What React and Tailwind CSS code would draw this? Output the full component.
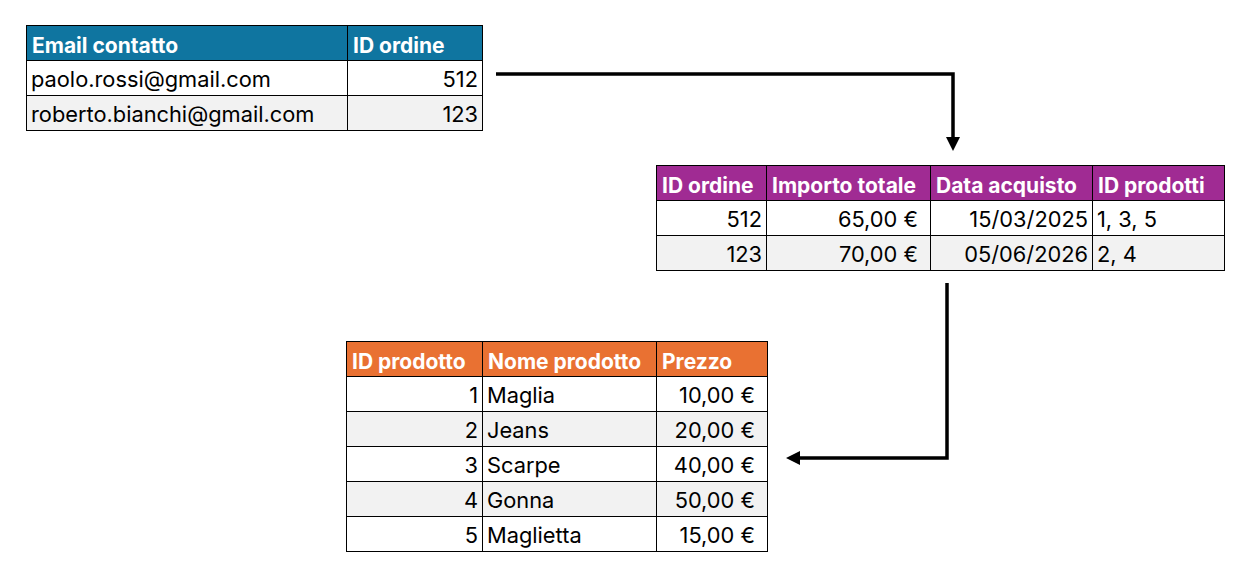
import React from "react";

const emails = [
  { email: "paolo.rossi@gmail.com", id: 512 },
  { email: "roberto.bianchi@gmail.com", id: 123 },
];

const orders = [
  { id: 512, total: "65,00 €", date: "15/03/2025", products: "1, 3, 5" },
  { id: 123, total: "70,00 €", date: "05/06/2026", products: "2, 4" },
];

const products = [
  { id: 1, name: "Maglia", price: "10,00 €" },
  { id: 2, name: "Jeans", price: "20,00 €" },
  { id: 3, name: "Scarpe", price: "40,00 €" },
  { id: 4, name: "Gonna", price: "50,00 €" },
  { id: 5, name: "Maglietta", price: "15,00 €" },
];

const th =
  "border border-black px-[5px] pt-[4px] text-left font-bold text-white text-[21px] leading-none whitespace-nowrap";
const td =
  "border border-black px-[4px] pt-[3px] text-[21.8px] leading-none text-black whitespace-nowrap";

const App = () => {
  return (
    <div
      className="relative w-[1238px] h-[577px] bg-white overflow-hidden"
      style={{ fontFamily: "Inter, 'Liberation Sans', sans-serif" }}
    >
      <div className="flex flex-col">
        {/* Email table */}
        <div className="pl-[26px] pt-[25px]">
          <table className="border-collapse table-fixed">
            <colgroup>
              <col className="w-[321px]" />
              <col className="w-[135px]" />
            </colgroup>
            <thead>
              <tr className="h-[35px] bg-[#0F75A0]">
                <th className={th}>Email contatto</th>
                <th className={th}>ID ordine</th>
              </tr>
            </thead>
            <tbody>
              {emails.map((row, i) => (
                <tr
                  key={row.id}
                  className={`h-[35px] ${i % 2 ? "bg-[#F2F2F2]" : "bg-white"}`}
                >
                  <td className={td}>{row.email}</td>
                  <td className={`${td} text-right`}>{row.id}</td>
                </tr>
              ))}
            </tbody>
          </table>
        </div>

        {/* Orders table */}
        <div className="pl-[656px] pt-[34px]">
          <table className="border-collapse table-fixed">
            <colgroup>
              <col className="w-[110px]" />
              <col className="w-[164px]" />
              <col className="w-[162px]" />
              <col className="w-[132px]" />
            </colgroup>
            <thead>
              <tr className="h-[35px] bg-[#A02B93]">
                <th className={th}>ID ordine</th>
                <th className={th}>Importo totale</th>
                <th className={th}>Data acquisto</th>
                <th className={th}>ID prodotti</th>
              </tr>
            </thead>
            <tbody>
              {orders.map((row, i) => (
                <tr
                  key={row.id}
                  className={`h-[35px] ${i % 2 ? "bg-[#F2F2F2]" : "bg-white"}`}
                >
                  <td className={`${td} text-right`}>{row.id}</td>
                  <td className={`${td} text-right pr-[12px]`}>{row.total}</td>
                  <td className={`${td} text-right`}>{row.date}</td>
                  <td className={td}>{row.products}</td>
                </tr>
              ))}
            </tbody>
          </table>
        </div>

        {/* Products table */}
        <div className="pl-[346px] pt-[70px]">
          <table className="border-collapse table-fixed">
            <colgroup>
              <col className="w-[136px]" />
              <col className="w-[174px]" />
              <col className="w-[111px]" />
            </colgroup>
            <thead>
              <tr className="h-[35px] bg-[#E97132]">
                <th className={th}>ID prodotto</th>
                <th className={th}>Nome prodotto</th>
                <th className={th}>Prezzo</th>
              </tr>
            </thead>
            <tbody>
              {products.map((row, i) => (
                <tr
                  key={row.id}
                  className={`h-[35px] ${i % 2 ? "bg-[#F2F2F2]" : "bg-white"}`}
                >
                  <td className={`${td} text-right`}>{row.id}</td>
                  <td className={td}>{row.name}</td>
                  <td className={`${td} text-right pr-[12px]`}>{row.price}</td>
                </tr>
              ))}
            </tbody>
          </table>
        </div>
      </div>

      {/* Connectors */}
      <svg
        className="absolute inset-0 pointer-events-none"
        width="1238"
        height="577"
        viewBox="0 0 1238 577"
      >
        <path
          d="M496 74 H953 V138"
          fill="none"
          stroke="#000"
          strokeWidth="3.5"
        />
        <polygon points="946,137 960,137 953,151" fill="#000" />
        <path
          d="M947 283 V458 H799"
          fill="none"
          stroke="#000"
          strokeWidth="3.5"
        />
        <polygon points="800,451 800,465 786,458" fill="#000" />
      </svg>
    </div>
  );
};

export default App;
